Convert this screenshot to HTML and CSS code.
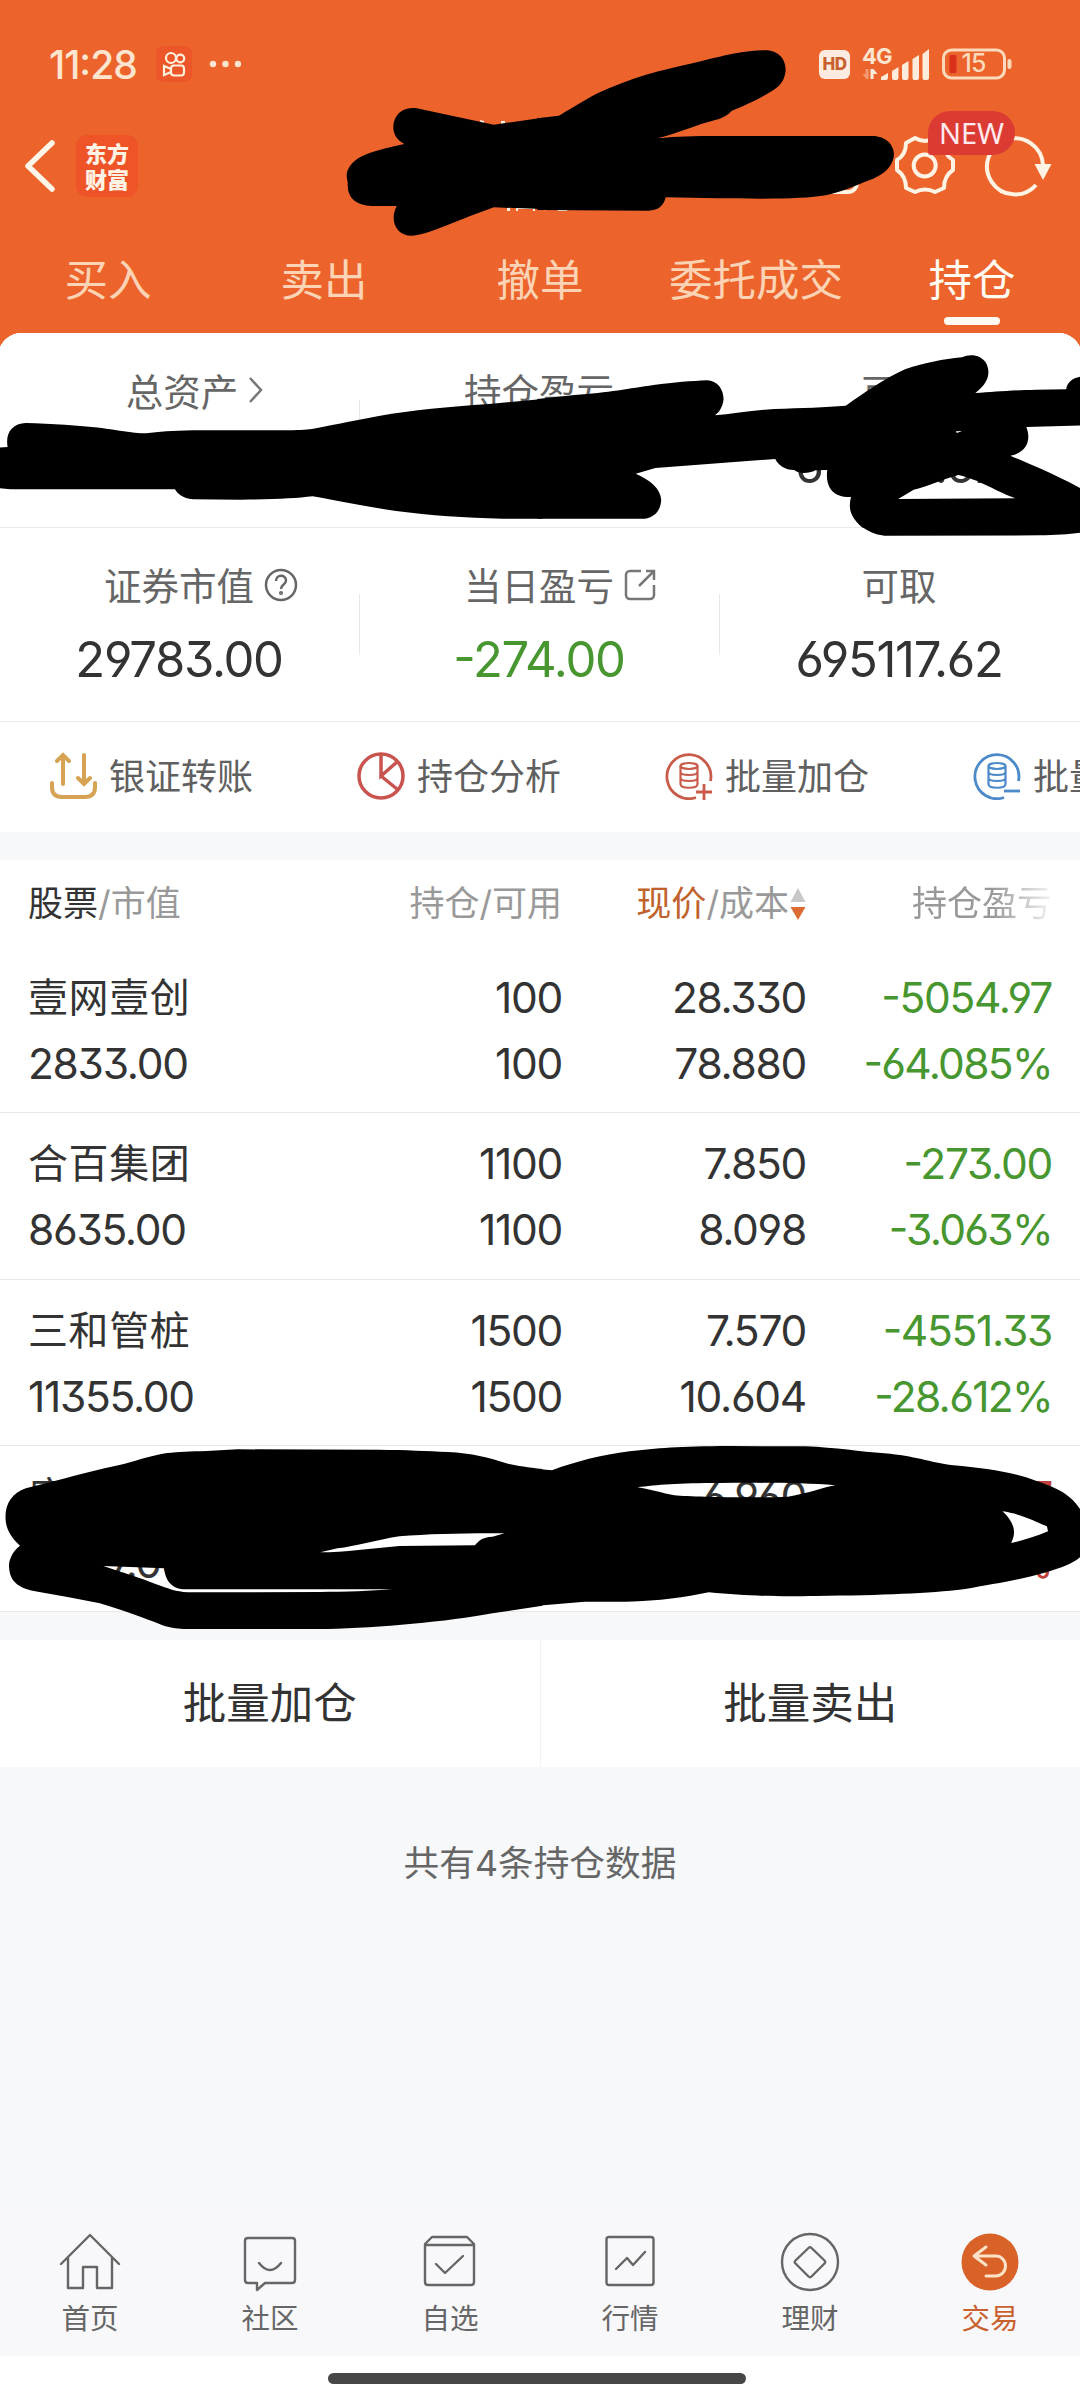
FILE: index.html
```html
<!DOCTYPE html>
<html lang="zh-CN">
<head>
<meta charset="utf-8">
<title>持仓</title>
<link rel="stylesheet" href="styles.css">
</head>
<body>
<div class="app">
  <header class="top">
    <div class="status">
      <span class="clock">11:28</span>
      <svg class="status-app" width="36" height="36" viewBox="0 0 36 36"><rect width="36" height="36" rx="7" fill="#ec5629"/><g fill="none" stroke="#fff0dc" stroke-width="2.2"><circle cx="15" cy="12" r="5"/><circle cx="24.3" cy="12.5" r="3.9"/><rect x="15" y="19.5" width="13" height="10" rx="3"/><path d="M15 23l-7-3v9l7-3"/></g></svg>
      <svg class="status-dots" width="32" height="8" viewBox="0 0 32 8" fill="#fde5cf"><circle cx="4" cy="4" r="3.2"/><circle cx="16.5" cy="4" r="3.2"/><circle cx="29" cy="4" r="3.2"/></svg>
      <span class="hd">HD</span>
      <div class="signal">
        <span class="net">4G</span>
        <svg width="68" height="34" viewBox="0 0 68 34" fill="#fdebdc"><path d="M19 33v-3l7-4v5q0 2-2 2zM30 24l6.500-4v11q0 2-2 2h-2.500q-2 0-2-2zM40 18l6.500-4v17q0 2-2 2h-2.500q-2 0-2-2zM50.500 12l6.500-4v23q0 2-2 2h-2.500q-2 0-2-2zM60.500 7l6.500-5v29q0 2-2 2h-2.500q-2 0-2-2z"/><path d="M8.500 22h3l4 5h-4v5h-3z"/><path d="M3.500 22h3v10h-2l-4-5h3z" opacity=".4"/></svg>
      </div>
      <svg class="battery" width="70" height="32" viewBox="0 0 70 32"><rect x="1.5" y="2" width="61" height="28" rx="8" fill="none" stroke="#fbd9bb" stroke-width="3"/><rect x="65.500" y="11" width="4" height="10" rx="2" fill="#fbd9bb"/><rect x="7.5" y="7" width="7" height="18" rx="1.5" fill="#d9301c"/><text x="31.5" y="24" text-anchor="middle" class="battery-text">15</text></svg>
    </div>
    <div class="bar">
      <svg class="back" width="34" height="54" viewBox="0 0 34 54"><path d="M29 4L5 27l24 23" fill="none" stroke="#fff6ea" stroke-width="5.5" stroke-linecap="round" stroke-linejoin="round"/></svg>
      <div class="logo">东方<br>财富</div>
      <svg class="tools" width="240" height="70" viewBox="0 0 240 70" fill="none" stroke="#fff3e4" stroke-width="4"><rect x="-3" y="10" width="48" height="51" rx="9"/><circle cx="112.700" cy="34.500" r="11"/><path d="M103 7Q113 13 123 7L132 12Q132 24 141 29V39Q132 45 132 57L123 61Q113 56 103 61L94 57Q94 45 85 39V29Q94 24 94 12Z" stroke-linejoin="round"/><path d="M231 34A28 28 0 1 0 224 54"/><path d="M222.500 33h17L231 49z" fill="#fff3e4" stroke="none"/></svg>
      <span class="badge">NEW</span>
    </div>
    <nav class="tabs"><a>买入</a><a>卖出</a><a>撤单</a><a>委托成交</a><a class="on">持仓</a></nav>
  </header>

  <section class="card">
    <div class="summary">
      <div class="cell first"><div class="label">总资产<svg width="16" height="28" viewBox="0 0 16 28"><path d="M2 2l11 12L2 26" fill="none" stroke="#777" stroke-width="2.5"/></svg></div></div>
      <div class="cell"><div class="label">持仓盈亏</div></div>
      <div class="cell"><div class="label">可用</div><div class="value">695117.62</div></div>
    </div>
    <div class="summary second">
      <div class="cell"><div class="label">证券市值<svg width="34" height="34" viewBox="0 0 34 34" fill="none" stroke="#666" stroke-width="2.5"><circle cx="17" cy="17" r="15"/><path d="M12 13c0-7 10-7 10-.5 0 4-5 4-5 8.500"/><circle cx="17" cy="25" r=".8"/></svg></div><div class="value">29783.00</div></div>
      <div class="cell"><div class="label">当日盈亏<svg width="34" height="34" viewBox="0 0 34 34" fill="none" stroke="#777" stroke-width="2.5"><path d="M17 3H6a4 4 0 0 0-4 4v20a4 4 0 0 0 4 4h20a4 4 0 0 0 4-4V17"/><path d="M15 18L30 3M22 3h8v9"/></svg></div><div class="value down">-274.00</div></div>
      <div class="cell"><div class="label">可取</div><div class="value">695117.62</div></div>
    </div>
    <div class="shortcuts">
      <a><svg width="48" height="48" viewBox="0 0 48 48" fill="none" stroke="#d6a355" stroke-width="4" stroke-linecap="round"><path d="M3 31v4q0 10 10 10h23q10 0 10-10v-4M14 32V4M8 9l6-6 6 6M35 3v28M29 26l6 6 6-6"/></svg><span>银证转账</span></a>
      <a><svg width="48" height="48" viewBox="0 0 48 48" fill="none" stroke="#c9544f" stroke-width="3.5"><circle cx="24" cy="24" r="22"/><path d="M24 2v22l16-14M24 24l16 13"/></svg><span>持仓分析</span></a>
      <a><svg width="48" height="48" viewBox="0 0 48 48" fill="none" stroke="#c95b4a" stroke-width="2.8"><path d="M45.500 29A22 22 0 1 0 31 45.500"/><g stroke-width="2.2"><ellipse cx="24" cy="14" rx="8.500" ry="3"/><path d="M15.500 14v18c0 5 17 5 17 0V14M15.500 20c0 4 17 4 17 0M15.500 26c0 4 17 4 17 0"/></g><path d="M31 40h16M39 32v16"/></svg><span>批量加仓</span></a>
      <a><svg width="48" height="48" viewBox="0 0 48 48" fill="none" stroke="#4d8aca" stroke-width="2.8"><path d="M45.500 29A22 22 0 1 0 31 45.500"/><g stroke-width="2.2"><ellipse cx="24" cy="14" rx="8.500" ry="3"/><path d="M15.500 14v18c0 5 17 5 17 0V14M15.500 20c0 4 17 4 17 0M15.500 26c0 4 17 4 17 0"/></g><path d="M31 39h16"/></svg><span>批量卖出</span></a>
    </div>
  </section>

  <section class="holdings">
    <div class="row head">
      <div><b>股票</b>/市值</div><div>持仓/可用</div>
      <div><em>现价</em>/成本<svg width="16" height="34" viewBox="0 0 16 34"><path d="M8 1l7.500 14H.5z" fill="#c8c8c8"/><path d="M8 33l7.500-13H.5z" fill="#dc6a33"/></svg></div>
      <div class="fade">持仓盈亏</div>
    </div>
    <div class="row"><div><span class="name">壹网壹创</span><span>2833.00</span></div><div><span>100</span><span>100</span></div><div><span>28.330</span><span>78.880</span></div><div class="down"><span>-5054.97</span><span class="pct">-64.085%</span></div></div>
    <div class="row"><div><span class="name">合百集团</span><span>8635.00</span></div><div><span>1100</span><span>1100</span></div><div><span>7.850</span><span>8.098</span></div><div class="down"><span>-273.00</span><span class="pct">-3.063%</span></div></div>
    <div class="row"><div><span class="name">三和管桩</span><span>11355.00</span></div><div><span>1500</span><span>1500</span></div><div><span>7.570</span><span>10.604</span></div><div class="down"><span>-4551.33</span><span class="pct">-28.612%</span></div></div>
    <div class="row"><div><span class="name">康</span><span class="part">7.00</span></div><div></div><div><span>6.960</span></div><div class="up"><span>7</span><span class="pct">%</span></div></div>
  </section>

  <section class="actions"><a>批量加仓</a><a>批量卖出</a></section>
  <p class="count">共有4条持仓数据</p>

  <nav class="nav">
    <a><svg width="64" height="64" viewBox="0 0 64 64"><path d="M3 34L32 5l29 29M10 28v30h15V37h14v21h15V28"/></svg>首页</a>
    <a><svg width="64" height="64" viewBox="0 0 64 64"><path d="M10 8h44q3 0 3 3v39q0 3-3 3H27l-8 7v-7h-9q-3 0-3-3V11q0-3 3-3zM21 33q11 14 22 0"/></svg>社区</a>
    <a><svg width="64" height="64" viewBox="0 0 64 64"><path d="M7 14l7-7h35l7 7v38q0 3-3 3H10q-3 0-3-3zM7 15h49M18 34l9 9 18-17"/></svg>自选</a>
    <a><svg width="64" height="64" viewBox="0 0 64 64"><rect x="8.5" y="7" width="47" height="48" rx="2.5"/><path d="M18 39l11-11 6 7 12-13"/></svg>行情</a>
    <a><svg width="64" height="64" viewBox="0 0 64 64"><circle cx="32" cy="32" r="28"/><path d="M30.500 18q1.500-1.500 3 0l13 12.500q1.500 1.500 0 3l-13 13q-1.500 1.500-3 0l-13-13q-1.500-1.500 0-3z"/></svg>理财</a>
    <a class="on"><svg width="64" height="64" viewBox="0 0 64 64"><circle cx="32" cy="32" r="28.5" fill="#d86228" stroke="none"/><path d="M28 17L16 26l12 9M16 26h22a9.500 10 0 0 1 0 20H28" stroke="#ffe3c8" stroke-width="3"/></svg>交易</a>
  </nav>
  <footer class="home"><i></i></footer>

  <svg class="marks" width="1080" height="2400" viewBox="0 0 1080 2400" fill-rule="evenodd">
    <path d="M480 120l4 1v4h-3zM501 121h4v4h-4zM507 206h3v5h-3zM516 206h2v2h14v-2h3v5h-2v-2h-15v2h-2zM543 207l2 4 2-4zM557 209h10v2h-9z" fill="#fff6ea"/>
    <g transform="scale(.34439 .33333)"><path d="M1575,353 L1434,374 L1210,325 C1170,318 1142,345 1142,382 C1142,405 1155,422 1174,432 C1130,442 1070,455 1040,475 C1005,500 1003,525 1010,548 C1006,590 1030,617 1080,618 L1152,618 C1130,660 1150,707 1195,707 C1240,707 1340,655 1434,622 L1575,627Z"/></g>
    <g transform="translate(540 0) scale(.34439 .33333)"><path d="M-8,355 L55,347 C110,315 150,285 200,265 C300,220 380,205 470,183 C540,165 600,150 660,151 C700,155 715,185 713,215 C708,250 690,265 650,287 C620,305 580,322 556,333 C540,352 520,358 480,368 C430,385 390,402 340,415 C400,409 450,408 510,408 L965,408 C1005,408 1028,435 1028,465 C1024,500 1000,525 950,543 C920,555 880,575 830,586 C750,600 600,597 365,592 C360,615 345,632 315,632 L-8,630Z"/></g>
    <g transform="translate(0 330) scale(.34439 .33333)"><path d="M-5,353 L22,351 C15,310 35,280 75,279 C150,281 230,287 290,293 C340,300 380,309 425,310 C460,306 500,302 560,301 L840,301 C870,300 900,298 910,296 C980,282 1040,270 1100,258 C1200,240 1300,230 1420,222 L1575,207 L1575,566 L1460,566 C1350,564 1250,556 1150,543 C1060,530 980,512 908,499 C860,505 800,508 700,509 L560,508 C530,506 515,490 508,478 L30,478 L-5,474Z"/></g>
    <g transform="translate(540 330) scale(.34439 .33333)"><path d="M-8,207 L100,195 C200,188 260,175 330,165 C390,157 440,153 485,151 C515,152 533,178 533,208 C531,230 520,248 508,256 C560,252 600,242 680,237 C760,234 830,232 888,227 C940,190 1000,145 1060,118 C1120,97 1170,88 1225,82 C1250,70 1280,75 1295,98 C1308,125 1306,155 1264,189 C1320,186 1360,181 1440,179 L1528,178 C1530,155 1550,142 1575,139 L1575,286 L1412,291 C1424,320 1422,365 1366,377 C1420,402 1480,425 1575,478 L1575,607 C1540,612 1500,615 1450,616 L1000,617 C970,614 955,603 935,592 C900,560 895,535 903,501 C850,503 828,470 834,420 L800,421 C780,432 750,432 738,420 C710,420 692,405 683,387 L335,414 L278,431 C320,450 350,475 352,510 C350,545 330,562 305,566 L-8,566Z M1040,507 L1085,479 C1130,468 1170,448 1215,435 C1230,438 1250,446 1270,453 C1310,472 1345,492 1380,505Z M1208,304 L1226,303 L1210,309Z"/></g>
    <g transform="translate(0 1420) scale(.34439 .33333)"><path d="M1575,147 C1530,142 1500,137 1470,130 C1420,112 1370,100 1300,96 C1240,93 1180,90 1100,89 L690,88 L600,93 C550,94 520,96 485,99 C430,108 390,125 350,134 C290,147 220,165 170,180 L75,205 C35,220 15,250 16,295 C17,330 35,355 58,377 C30,400 22,430 28,455 C35,495 70,508 110,515 C170,526 230,536 290,550 C360,572 420,595 470,615 C500,625 520,627 540,627 L950,627 C1100,624 1300,605 1430,580 L1575,557Z M930,397 L980,385 C1030,380 1100,358 1160,349 C1250,341 1370,339 1465,340 L1430,350 C1400,352 1390,362 1379,376 L1160,378 C1080,385 1000,397 930,397Z M300,438 L477,445 C478,475 495,505 530,508 L1140,508 C1080,513 1000,516 930,516 L545,517 C510,515 490,506 470,499 C420,478 380,465 350,455Z"/></g>
    <g transform="translate(540 1420) scale(.34439 .33333)"><path d="M-8,147 L35,151 C100,125 180,105 260,94 C340,84 400,79 550,78 L770,79 C860,83 930,95 1000,100 C1090,108 1130,127 1200,136 C1290,145 1370,155 1440,182 C1510,205 1550,230 1575,280 L1575,405 C1550,430 1520,440 1470,457 C1400,478 1330,490 1230,508 C1130,520 1000,526 800,528 C680,530 600,528 490,517 C420,532 350,543 250,545 L130,545 L-8,557Z M283,202 C340,194 400,189 520,189 C640,188 760,188 858,196 C830,200 780,220 720,230 C640,234 450,232 390,226 C350,218 320,208 283,202Z M1343,274 C1390,280 1440,305 1472,319 L1475,334 C1440,350 1400,362 1368,369 C1383,340 1380,310 1343,274Z"/></g>
  </svg>
</div>
</body>
</html>
```
FILE: styles.css
```css
* { box-sizing: border-box; }
body { margin: 0; background: #f7f8fa; }
svg { display: block; flex: none; }
.app {
  position: relative; width: 1080px; height: 2400px; overflow: hidden;
  display: flex; flex-direction: column;
  font-family: Inter, "Noto Sans CJK SC", sans-serif; font-weight: 395; color: #333;
  font-feature-settings: "cv03", "cv04", "cv09", "case";
  background: #f7f8fa;
}
.top { height: 333px; background: #ec642b; flex: none; display: flex; flex-direction: column; }

.status { height: 128px; display: flex; align-items: center; padding: 0 68px 0 49px; flex: none; }
.clock { width: 107px; font-size: 39px; font-weight: 500; color: #fde5cf; letter-spacing: -1px; white-space: nowrap; }
.status-dots { margin-left: 17px; margin-right: auto; }
.hd { width: 31px; height: 29px; border-radius: 6px; background: #fdebe0; color: #c95f2c; font-size: 17px; line-height: 29px; font-weight: 800; text-align: center; letter-spacing: -.5px; }
.signal { position: relative; width: 68px; height: 34px; margin-left: 12px; margin-right: 12px; }
.net { position: absolute; left: 0; top: -2px; font-size: 22px; line-height: 22px; font-weight: 700; color: #fde5cf; letter-spacing: -1px; }
.battery-text { font-size: 25px; font-weight: 500; fill: #fbd9bb; letter-spacing: -1px; }

.bar { position: relative; height: 102px; display: flex; align-items: center; padding: 0 23px 26px; flex: none; }
.logo { width: 62px; height: 62px; margin-left: 19px; padding-top: 4px; border-radius: 11px; background: #ef5428; text-align: center; font: 900 22px/26px "Noto Sans CJK SC", sans-serif; color: #fff3e6; }
.tools { margin-left: auto; margin-right: 5px; }
.badge { position: absolute; left: 928px; top: -17px; width: 87px; height: 44px; border-radius: 22px 22px 22px 3px; background: #dc3b33; color: #ffe9ef; font: 400 29px/44px "Noto Sans", sans-serif; text-align: center; }

.tabs { display: flex; height: 103px; }
.tabs a { position: relative; flex: 1; text-align: center; font-size: 43.5px; line-height: 101px; color: #fcd3b5; white-space: nowrap; }
.tabs .on { color: #fffaf2; }
.tabs .on::after { content: ""; position: absolute; left: 80px; bottom: 8px; width: 56px; height: 8px; border-radius: 4px; background: #fffaf2; }

/* White sheet with rounded top corners over the orange header */
.card {
  height: 499px; flex: none;
  background:
    radial-gradient(circle at 22px 24px, #fff 24px, transparent 24.5px) 0 0 / 22px 15px no-repeat,
    radial-gradient(circle at 0 24px, #fff 24px, transparent 24.5px) 100% 0 / 22px 15px no-repeat,
    linear-gradient(#fff, #fff) 22px 0 / 1036px 15px no-repeat,
    linear-gradient(#fff, #fff) 0 15px / 100% 484px no-repeat,
    #ec642b;
}
.summary { height: 195px; display: flex; border-bottom: 1px solid #eaeaea; padding-top: 31px; }
.second { height: 194px; padding-top: 30px; }
.cell { position: relative; flex: 1; text-align: center; }
.cell + .cell::before { content: ""; position: absolute; left: -1px; top: 36px; width: 1px; height: 61px; background: #e8e8e8; }
.label { display: flex; justify-content: center; align-items: center; height: 50px; padding-right: 2px; font-size: 37.5px; color: #666; }
.label svg { margin-left: 10px; margin-right: -44px; position: relative; top: 2px; }
.first .label { padding-left: 11px; }
.label svg[width="16"] { margin-right: -21px; top: 1px; }
.value { height: 60px; margin: 22px 2px 0 0; font-size: 49px; line-height: 60px; letter-spacing: -1.3px; }
.down { color: #47962f; }
.up { color: #c0403a; }
.shortcuts { display: flex; padding-left: 49px; height: 110px; }
.shortcuts a { width: 308px; flex: none; display: flex; align-items: center; gap: 12px; font-size: 36px; color: #606060; white-space: nowrap; }
.shortcuts span { padding-bottom: 6px; }
.shortcuts svg { margin-bottom: 2px; }

.holdings { margin-top: 28px; background: #fff; flex: none; }
.row { display: grid; grid-template-columns: 301px 233px 244px 246px; height: 166.3px; padding-left: 28px; padding-top: 18px; border-bottom: 1px solid #e8e8e8; font-size: 42.5px; letter-spacing: -1.3px; }
.row > div { text-align: right; white-space: nowrap; }
.row > div:first-child { text-align: left; }
.row span { display: block; height: 66px; line-height: 66px; }
.row .name { font-size: 40px; letter-spacing: .6px; }
.row .part { padding-left: 80px; }
.row .pct { letter-spacing: -1.7px; }
.head { height: 87px; padding-top: 0; border: 0; font-size: 35px; line-height: 87px; color: #999; letter-spacing: 0; }
.head b { font-weight: 400; color: #333; }
.head em { font-style: normal; font-weight: 400; color: #c0622c; }
.head svg { display: inline-block; vertical-align: -5px; margin-left: 1px; }
.fade { -webkit-mask-image: linear-gradient(90deg, #000 76%, transparent 103%); mask-image: linear-gradient(90deg, #000 76%, transparent 103%); }

.actions { display: flex; height: 127px; margin-top: 28px; background: #fff; flex: none; }
.actions a { flex: 1; text-align: center; font-size: 43.5px; line-height: 126px; }
.actions a:first-child { border-right: 1px solid #f3f3f5; }
.count { margin: 66px 0 0; text-align: center; font-size: 35.7px; line-height: 60px; color: #666; }

.nav { display: flex; height: 150px; margin-top: auto; background: #f8f8fb; flex: none; }
.nav a { flex: 1; display: flex; flex-direction: column; align-items: center; padding-top: 24px; font-size: 28.5px; line-height: 50px; color: #666; }
.nav svg { fill: none; stroke: #666; stroke-width: 2.4; stroke-linecap: round; stroke-linejoin: round; }
.nav .on { color: #c9602f; }
.home { height: 44px; background: #fff; display: flex; justify-content: center; padding-top: 17px; flex: none; }
.home i { width: 418px; height: 11px; margin-right: 6px; border-radius: 6px; background: #474747; }
.marks { position: absolute; left: 0; top: 0; }
```
